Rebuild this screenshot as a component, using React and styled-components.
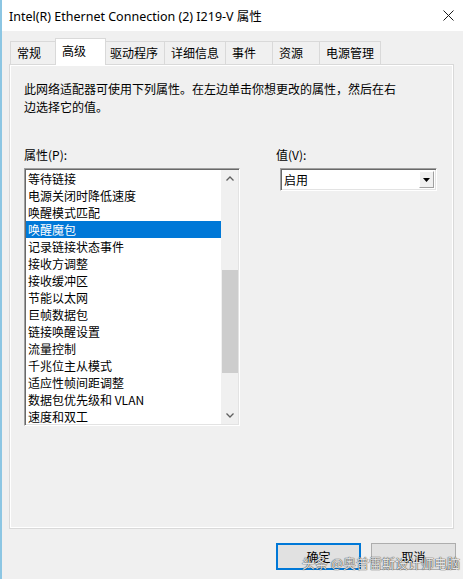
import React from "react";
import styled, { createGlobalStyle } from "styled-components";

const GlobalStyle = createGlobalStyle`
  body {
    margin: 0;
    background: #f0f0f0;
    font-family: "Noto Sans CJK SC", sans-serif;
    color: #000;
  }
  * { box-sizing: border-box; }
`;

const Window = styled.div`
  position: relative;
  width: 463px;
  height: 579px;
  display: flex;
  flex-direction: column;
  background: #f0f0f0;
  border-left: 2px solid #8cc6e3;
  overflow: hidden;
`;

const TitleBar = styled.div`
  height: 31px;
  flex-shrink: 0;
  display: flex;
  align-items: center;
  justify-content: space-between;
  padding: 0 9px 0 7px;
  background: #fff;
  font-family: "Segoe UI", "Noto Sans", "Noto Sans CJK SC", sans-serif;
  font-size: 12.5px;
`;

const CloseButton = styled.svg`
  width: 11px;
  height: 11px;
  stroke: #1a1a1a;
  stroke-width: 1;
`;

const Body = styled.div`
  display: flex;
  flex-direction: column;
  padding: 7px 7px 0 7px;
`;

const TabStrip = styled.div`
  display: flex;
  align-items: flex-end;
  height: 26px;
  padding-left: 1px;
`;

const Tab = styled.div`
  height: ${(p) => (p.$active ? "27px" : "23px")};
  min-width: ${(p) => (p.$active ? "51px" : "47px")};
  margin: ${(p) => (p.$active ? "0 -2px -1px" : "0")};
  padding: 0 6px;
  border: 1px solid #d9d9d9;
  border-bottom: none;
  border-left-width: ${(p) => (p.$active || p.$first ? "1px" : "0")};
  background: ${(p) => (p.$active ? "#fff" : "#f0f0f0")};
  position: ${(p) => (p.$active ? "relative" : "static")};
  z-index: ${(p) => (p.$active ? 1 : 0)};
  font-size: 12px;
  line-height: ${(p) => (p.$active ? "24px" : "22px")};
  white-space: nowrap;
`;

const Panel = styled.div`
  height: 465px;
  margin-right: 2px;
  padding: 15px 14px;
  background: #f0f0f0;
  border: 1px solid #d9d9d9;
  box-shadow: inset 1px 1px 0 #fff, inset -1px -1px 0 #fff;
`;

const Description = styled.p`
  width: 376px;
  margin: 0;
  font-size: 12px;
  line-height: 18px;
`;

const Columns = styled.div`
  display: flex;
  gap: 36px;
  margin-top: 30px;
`;

const Column = styled.div`
  display: flex;
  flex-direction: column;
  width: ${(p) => p.$width || "auto"};
`;

const Label = styled.div`
  font-size: 12px;
  line-height: 18px;
  margin-bottom: 4px;
`;

const ListBox = styled.div`
  height: 258px;
  display: flex;
  padding: 1px;
  background: #fff;
  border: 1px solid;
  border-color: #a0a0a0 #fff #fff #a0a0a0;
  box-shadow: inset 1px 1px 0 #696969, inset -1px -1px 0 #e3e3e3;
`;

const Items = styled.div`
  flex: 1;
  overflow: hidden;
`;

const Item = styled.div`
  height: 17px;
  padding-left: 2px;
  font-size: 12px;
  line-height: 17px;
  white-space: nowrap;
  background: ${(p) => (p.$selected ? "#0078d7" : "transparent")};
  color: ${(p) => (p.$selected ? "#fff" : "#000")};
`;

const ScrollBar = styled.div`
  width: 17px;
  display: flex;
  flex-direction: column;
  background: #f0f0f0;
`;

const ScrollButton = styled.div`
  height: 17px;
  display: flex;
  align-items: center;
  justify-content: center;
`;

const Track = styled.div`
  flex: 1;
`;

const Thumb = styled.div`
  margin-top: ${(p) => p.$offset}px;
  height: ${(p) => p.$size}px;
  margin-left: 1px;
  background: #cdcdcd;
`;

const Chevron = styled.svg`
  width: 8px;
  height: 5px;
  fill: none;
  stroke: #606060;
  stroke-width: 1.3;
`;

const Select = styled.div`
  margin-left: 4px;
  width: 157px;
  height: 23px;
  display: flex;
  align-items: stretch;
  background: #fff;
  border: 1px solid;
  border-color: #a0a0a0 #fff #fff #a0a0a0;
  box-shadow: inset 1px 1px 0 #696969, inset -1px -1px 0 #e3e3e3;
  padding: 2px 2px 2px 2px;
`;

const SelectValue = styled.div`
  flex: 1;
  padding-left: 1px;
  font-size: 12px;
  line-height: 17px;
`;

const SelectArrow = styled.div`
  width: 15px;
  display: flex;
  align-items: center;
  justify-content: center;
  background: #f0f0f0;
  border: 1px solid;
  border-color: #fff #a0a0a0 #a0a0a0 #fff;
`;

const Footer = styled.div`
  display: flex;
  justify-content: flex-end;
  gap: 10px;
  margin-top: 14px;
`;

const Button = styled.button`
  width: 85px;
  height: 27px;
  padding: 0;
  background: #e1e1e1;
  border: ${(p) => (p.$primary ? "2px solid #0078d7" : "1px solid #adadad")};
  font-family: "Noto Sans CJK SC", sans-serif;
  font-size: 12px;
  color: #000;
`;

const Watermark = styled.div`
  position: absolute;
  right: 3px;
  bottom: 7px;
  font-size: 13px;
  line-height: 18px;
  color: rgba(255, 255, 255, 0.9);
  text-shadow: 0 0 1px rgba(0, 0, 0, 0.75), 0 0 1px rgba(0, 0, 0, 0.75);
  white-space: nowrap;
  pointer-events: none;
`;

const tabs = ["常规", "高级", "驱动程序", "详细信息", "事件", "资源", "电源管理"];

const properties = [
  "等待链接",
  "电源关闭时降低速度",
  "唤醒模式匹配",
  "唤醒魔包",
  "记录链接状态事件",
  "接收方调整",
  "接收缓冲区",
  "节能以太网",
  "巨帧数据包",
  "链接唤醒设置",
  "流量控制",
  "千兆位主从模式",
  "适应性帧间距调整",
  "数据包优先级和 VLAN",
  "速度和双工",
];

export default function App() {
  return (
    <>
      <GlobalStyle />
      <Window>
        <TitleBar>
          <span>Intel(R) Ethernet Connection (2) I219-V 属性</span>
          <CloseButton viewBox="0 0 11 11">
            <path d="M0.5 0.5 L10.5 10.5 M10.5 0.5 L0.5 10.5" />
          </CloseButton>
        </TitleBar>
        <Body>
          <TabStrip>
            {tabs.map((t, i) => (
              <Tab key={t} $first={i === 0} $active={t === "高级"}>
                {t}
              </Tab>
            ))}
          </TabStrip>
          <Panel>
            <Description>
              此网络适配器可使用下列属性。在左边单击你想更改的属性，然后在右边选择它的值。
            </Description>
            <Columns>
              <Column $width="216px">
                <Label>属性(P):</Label>
                <ListBox>
                  <Items>
                    {properties.map((p) => (
                      <Item key={p} $selected={p === "唤醒魔包"}>
                        {p}
                      </Item>
                    ))}
                  </Items>
                  <ScrollBar>
                    <ScrollButton>
                      <Chevron viewBox="0 0 8 5">
                        <polyline points="0.5,4.5 4,1 7.5,4.5" />
                      </Chevron>
                    </ScrollButton>
                    <Track>
                      <Thumb $offset={83} $size={103} />
                    </Track>
                    <ScrollButton>
                      <Chevron viewBox="0 0 8 5">
                        <polyline points="0.5,0.5 4,4 7.5,0.5" />
                      </Chevron>
                    </ScrollButton>
                  </ScrollBar>
                </ListBox>
              </Column>
              <Column>
                <Label>值(V):</Label>
                <Select>
                  <SelectValue>启用</SelectValue>
                  <SelectArrow>
                    <svg width="7" height="4" viewBox="0 0 7 4">
                      <polygon points="0,0 7,0 3.5,4" fill="#000" />
                    </svg>
                  </SelectArrow>
                </Select>
              </Column>
            </Columns>
          </Panel>
          <Footer>
            <Button $primary>确定</Button>
            <Button>取消</Button>
          </Footer>
        </Body>
        <Watermark>头条 @奥普雷斯设计师电脑</Watermark>
      </Window>
    </>
  );
}
